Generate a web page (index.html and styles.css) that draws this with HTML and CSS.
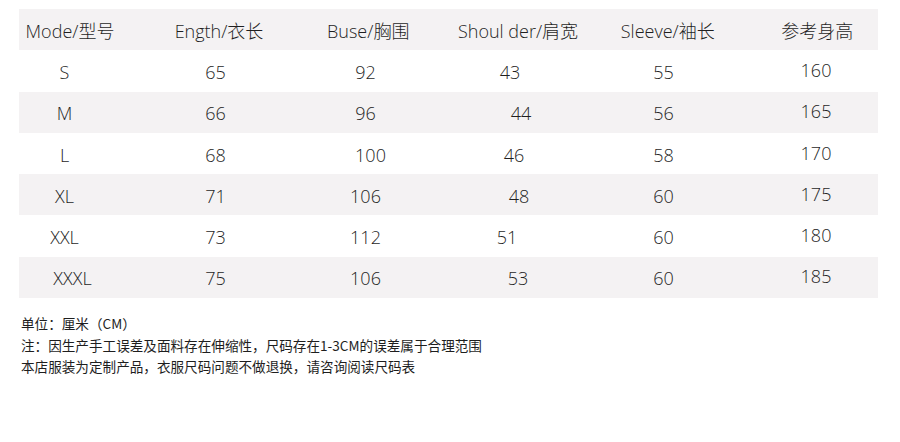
FILE: index.html
```html
<!DOCTYPE html>
<html lang="zh-CN">
<head>
<meta charset="utf-8">
<title>尺码表</title>
<link rel="stylesheet" href="styles.css">
</head>
<body>
<div class="size-table">
  <div class="row row--head">
    <div class="cell">Mode/型号</div>
    <div class="cell">Ength/衣长</div>
    <div class="cell">Buse/胸围</div>
    <div class="cell">Shoul der/肩宽</div>
    <div class="cell">Sleeve/袖长</div>
    <div class="cell">参考身高</div>
  </div>
  <div class="row">
    <div class="cell">S</div>
    <div class="cell">65</div>
    <div class="cell">92</div>
    <div class="cell nudge-l4">43</div>
    <div class="cell">55</div>
    <div class="cell cell--high">160</div>
  </div>
  <div class="row row--shade">
    <div class="cell">M</div>
    <div class="cell">66</div>
    <div class="cell">96</div>
    <div class="cell nudge-r7">44</div>
    <div class="cell">56</div>
    <div class="cell cell--high">165</div>
  </div>
  <div class="row">
    <div class="cell">L</div>
    <div class="cell">68</div>
    <div class="cell nudge-r5">100</div>
    <div class="cell">46</div>
    <div class="cell">58</div>
    <div class="cell cell--high">170</div>
  </div>
  <div class="row row--shade">
    <div class="cell">XL</div>
    <div class="cell">71</div>
    <div class="cell">106</div>
    <div class="cell nudge-r5">48</div>
    <div class="cell">60</div>
    <div class="cell cell--high">175</div>
  </div>
  <div class="row">
    <div class="cell">XXL</div>
    <div class="cell">73</div>
    <div class="cell">112</div>
    <div class="cell nudge-l7">51</div>
    <div class="cell">60</div>
    <div class="cell cell--high">180</div>
  </div>
  <div class="row row--shade">
    <div class="cell nudge-r8">XXXL</div>
    <div class="cell">75</div>
    <div class="cell">106</div>
    <div class="cell nudge-r4">53</div>
    <div class="cell">60</div>
    <div class="cell cell--high">185</div>
  </div>
</div>
<div class="notes">
  <p>单位：厘米（CM）</p>
  <p>注：因生产手工误差及面料存在伸缩性，尺码存在1-3CM的误差属于合理范围</p>
  <p>本店服装为定制产品，衣服尺码问题不做退换，请咨询阅读尺码表</p>
</div>
</body>
</html>
```
FILE: styles.css
```css
* { box-sizing: border-box; }
html, body { margin: 0; padding: 0; background: #ffffff; }
body {
  font-family: "Open Sans", "Noto Sans CJK SC", sans-serif;
  font-weight: 300;
  color: #1f1f1f;
}
.size-table {
  margin: 9px 0 0 19px;
  width: 859px;
}
.row {
  display: grid;
  grid-template-columns: 121px 151px 149px 148px 151px 139px;
  height: 41.3px;
  align-items: center;
  font-size: 18px;
  line-height: 20px;
}
.row--shade, .row--head { background: #f4f2f3; }
.row--head {
  grid-template-columns: 125.5px 149px 149.5px 150px 149.5px 135.5px;
}
.cell {
  text-align: center;
  white-space: nowrap;
  padding-top: 2px;
}
.cell:first-child { padding-right: 30px; }
.cell:last-child { padding-left: 15px; }
.row--head .cell:first-child { padding-right: 23.5px; }
.row--head .cell:last-child { padding-left: 14px; }
.cell--high { padding-top: 0; padding-bottom: 2px; }
.nudge-r4 { padding-left: 8px; }
.nudge-r5 { padding-left: 10px; }
.nudge-r7 { padding-left: 14px; }
.cell.nudge-r8 { padding-right: 14px; }
.nudge-l4 { padding-right: 8px; }
.nudge-l7 { padding-right: 14px; }
.notes {
  margin: 15px 0 0 21px;
  font-size: 13.6px;
  line-height: 21.5px;
  color: #1e1e1e;
  font-family: "Noto Sans CJK SC", sans-serif;
  font-weight: 400;
}
.notes p { margin: 0; }
```
